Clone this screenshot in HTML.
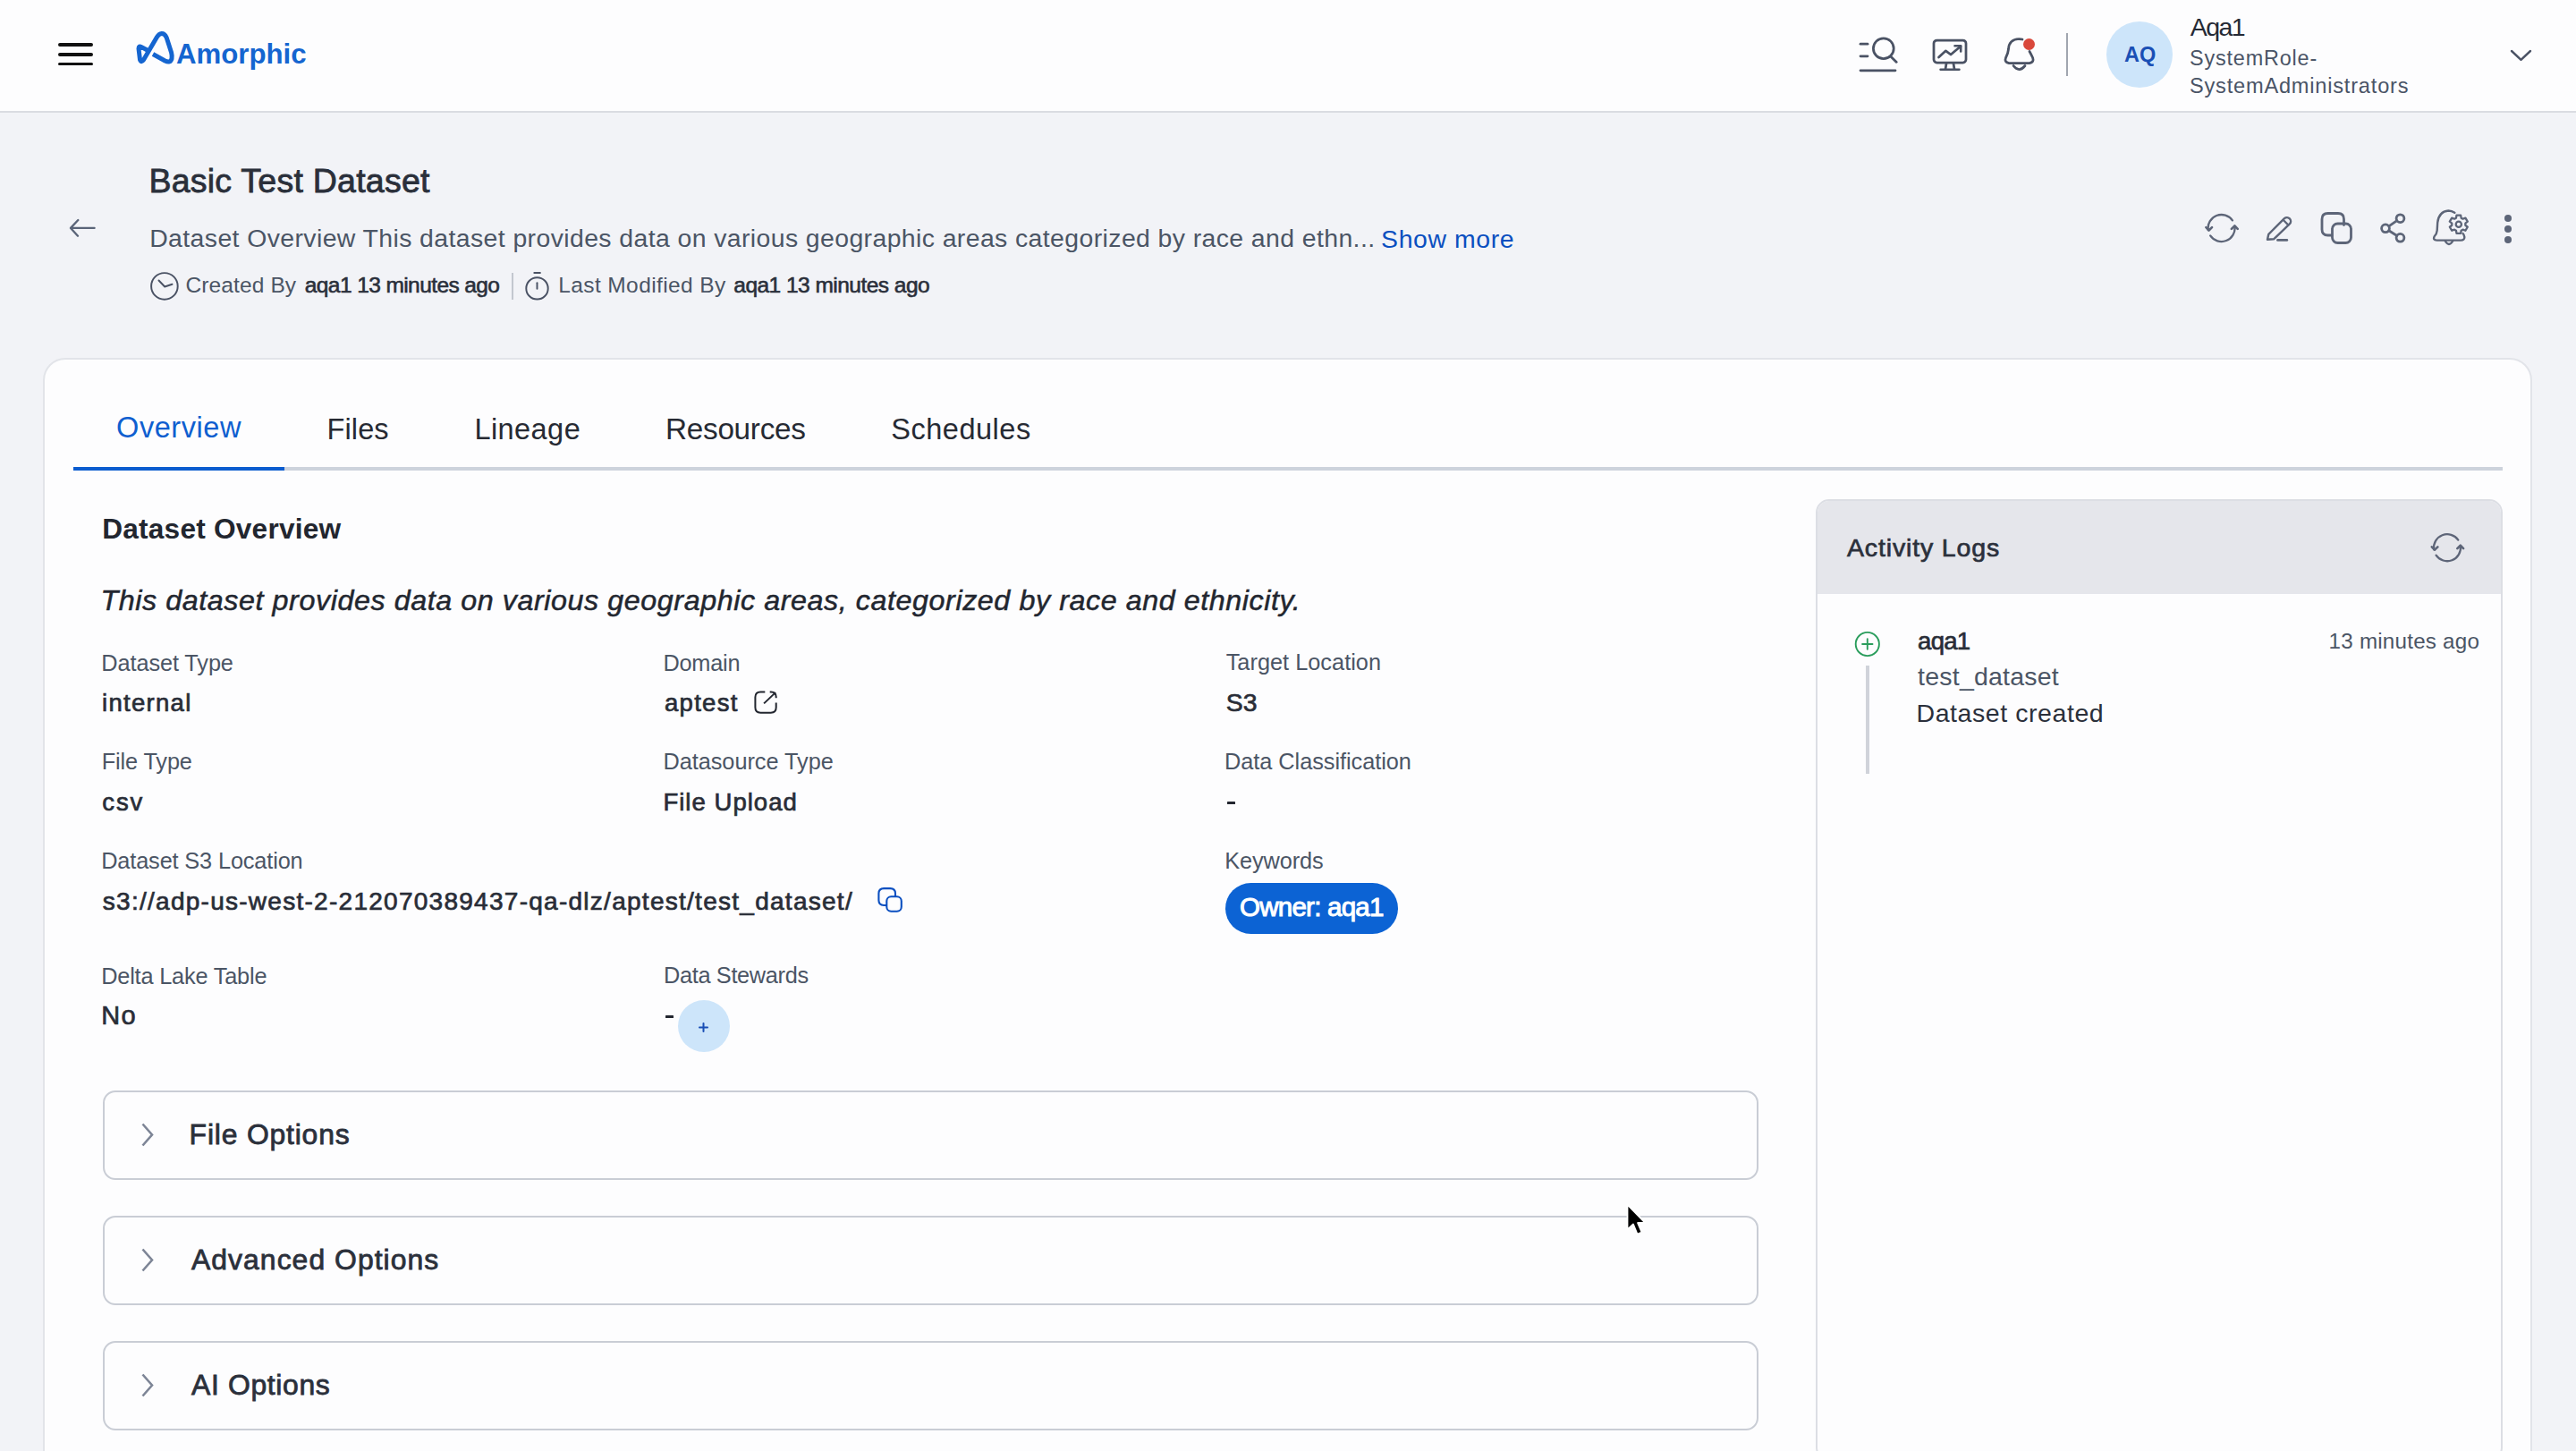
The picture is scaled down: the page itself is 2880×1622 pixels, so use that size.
<!DOCTYPE html>
<html><head><meta charset="utf-8"><style>
html,body{margin:0;padding:0;width:2880px;height:1622px;overflow:hidden;background:#f2f3f7;}
body{position:relative;font-family:"Liberation Sans",sans-serif;}
.t{position:absolute;white-space:nowrap;}
svg{overflow:visible}
@media (max-width:2000px){html{zoom:0.5}}
</style></head><body>
<div style="position:absolute;left:0;top:0;width:2880px;height:124px;background:#fdfdfe;border-bottom:2px solid #dadce2"></div>
<div style="position:absolute;left:64.5px;top:48.4px;width:39.2px;height:3.4px;border-radius:2px;background:#111"></div>
<div style="position:absolute;left:64.5px;top:59.2px;width:39.2px;height:3.4px;border-radius:2px;background:#111"></div>
<div style="position:absolute;left:64.5px;top:70.1px;width:39.2px;height:3.4px;border-radius:2px;background:#111"></div>
<svg style="position:absolute;left:0;top:0" width="400" height="124" viewBox="0 0 400 124">
<path d="M171 60.5 L184.5 68 Q190.5 71 192 65.5 Q192.6 62.5 191.6 58.8 L186.2 42 Q184 37.3 180.7 37.5 Q177.6 37.8 175.4 41.6 L160.6 66.8 Q158 70.5 156.5 66.8 L155 54.2 Q155 50.8 158.3 52.6 L165 56.3" fill="none" stroke="#1565d0" stroke-width="5" stroke-linejoin="round"/>
</svg>
<div class="t" style="left:197.0px;top:45px;font-size:31.2px;line-height:31.2px;color:#1565d0;font-weight:bold;">Amorphic</div>
<svg style="position:absolute;left:2060px;top:30px" width="240" height="60" viewBox="2060 30 240 60" fill="none" stroke="#4a5264" stroke-width="2.75" stroke-linecap="round" stroke-linejoin="round">
<line x1="2080" y1="49.2" x2="2088" y2="49.2"/>
<line x1="2080" y1="62.8" x2="2088" y2="62.8"/>
<line x1="2080" y1="78.8" x2="2119" y2="78.8"/>
<circle cx="2105.8" cy="54.2" r="11.4"/>
<line x1="2114" y1="63.2" x2="2120.3" y2="69.4"/>
<rect x="2162" y="45" width="36" height="25" rx="3.5"/>
<path d="M2176 71 L2175 77.5 M2184 71 L2185 77.5"/>
<line x1="2169.5" y1="77.8" x2="2190.5" y2="77.8" stroke-width="2.4"/>
<path d="M2167.5 64 L2175.4 56.8 L2181 61 L2192 51.8"/>
<path d="M2185.5 51.3 L2192.2 51.3 L2192.2 57.5" stroke-width="2.6"/>
<path d="M2269 57.5 Q2271 61 2272.6 64.5 Q2274.5 69.5 2269 70.6 L2246 70.6 Q2240.5 69.5 2242.5 64.5 Q2245 60 2245.5 55 Q2246 44 2257.4 43.5 Q2259.5 43.5 2261 44"/>
<path d="M2251 73.5 Q2257.4 81.5 2264 73.5"/>
</svg>
<div style="position:absolute;left:2261.5px;top:42.6px;width:13px;height:13px;border-radius:50%;background:#d9483b"></div>
<div style="position:absolute;left:2310px;top:37px;width:2px;height:48px;background:#a0a5af"></div>
<div style="position:absolute;left:2355px;top:24px;width:74px;height:74px;border-radius:50%;background:#cde5fa"></div>
<div class="t" style="left:2375.0px;top:50.2px;font-size:23.5px;line-height:23.5px;color:#1a4fb5;font-weight:bold;">AQ</div>
<div class="t" style="left:2448.8px;top:15.799999999999997px;font-size:28.5px;line-height:28.5px;color:#252a35;letter-spacing:-1.6px;">Aqa1</div>
<div class="t" style="left:2448.0px;top:54.400000000000006px;font-size:23.39px;line-height:23.39px;color:#4a5466;letter-spacing:0.84px;">SystemRole-</div>
<div class="t" style="left:2448.0px;top:84.8px;font-size:23.59px;line-height:23.59px;color:#4a5466;letter-spacing:0.8px;">SystemAdministrators</div>
<svg style="position:absolute;left:2800px;top:50px" width="40" height="24" viewBox="2800 50 40 24" fill="none" stroke="#4a5264" stroke-width="2.4" stroke-linecap="round" stroke-linejoin="round"><path d="M2808 57 L2818.5 66.8 L2829 57"/></svg>
<div class="t" style="left:166.4px;top:183.5px;font-size:37.5px;line-height:37.5px;color:#2a2f3a;letter-spacing:0.249px;-webkit-text-stroke:0.8px #2a2f3a;">Basic Test Dataset</div>
<svg style="position:absolute;left:70px;top:235px" width="45" height="40" viewBox="70 235 45 40" fill="none" stroke="#5a6478" stroke-width="2.3" stroke-linecap="round" stroke-linejoin="round"><path d="M105.6 254.9 L79.2 254.9 M87.3 246 L79 254.9 L87 263.7"/></svg>
<div class="t" style="left:167.2px;top:252.39999999999998px;font-size:28.4px;line-height:28.4px;color:#4b5565;letter-spacing:0.408px;">Dataset Overview This dataset provides data on various geographic areas categorized by race and ethn...</div>
<div class="t" style="left:1544.1px;top:253px;font-size:28.4px;line-height:28.4px;color:#0a4fc0;letter-spacing:0.6px;">Show more</div>
<svg style="position:absolute;left:160px;top:295px" width="470" height="50" viewBox="160 295 470 50" fill="none" stroke="#4a5264" stroke-width="1.95" stroke-linecap="round" stroke-linejoin="round">
<circle cx="183.9" cy="319.9" r="14.8"/>
<path d="M177.5 313.5 L184.2 320.5 L192.5 317.8"/>
<circle cx="600.5" cy="322.4" r="12.2"/>
<line x1="600.5" y1="316.2" x2="600.5" y2="322.8"/>
<line x1="597.3" y1="305" x2="603.9" y2="305"/>
</svg>
<div class="t" style="left:207.5px;top:307.1px;font-size:24.5px;line-height:24.5px;color:#4b5565;letter-spacing:0.116px;">Created By</div>
<div class="t" style="left:340.8px;top:307.26px;font-size:24.5px;line-height:24.5px;color:#2a2f3a;letter-spacing:-0.591px;-webkit-text-stroke:0.6px #2a2f3a;">aqa1 13 minutes ago</div>
<div style="position:absolute;left:571.5px;top:305px;width:2px;height:30px;background:#c3c7cf"></div>
<div class="t" style="left:624.3px;top:307.1px;font-size:24.5px;line-height:24.5px;color:#4b5565;letter-spacing:0.384px;">Last Modified By</div>
<div class="t" style="left:820.3px;top:307.26px;font-size:24.5px;line-height:24.5px;color:#2a2f3a;letter-spacing:-0.529px;-webkit-text-stroke:0.6px #2a2f3a;">aqa1 13 minutes ago</div>
<svg style="position:absolute;left:0;top:0;width:1px;height:1px" viewBox="0 0 1 1" fill="none" stroke="#5d6578" stroke-width="2.3" stroke-linecap="round" stroke-linejoin="round"><path d="M2495.89 246.40 A15.0 15.0 0 0 0 2468.75 257.09"/><path d="M2466.40 254.10 L2469.60 257.50 L2473.00 254.10" stroke-width="2.5999999999999996"/><path d="M2471.16 263.39 A15.0 15.0 0 0 0 2498.45 252.91"/><path d="M2494.90 255.90 L2498.40 252.50 L2501.70 255.90" stroke-width="2.5999999999999996"/></svg>
<svg style="position:absolute;left:2450px;top:225px" width="380" height="60" viewBox="2450 225 380 60" fill="none" stroke="#5d6578" stroke-width="2.8" stroke-linecap="round" stroke-linejoin="round">
<path d="M2535 267.8 L2536.3 261.8 L2554 244.2 A4.25 4.25 0 0 1 2560 250.2 L2542.3 267.2 Z" stroke-width="2.4"/>
<line x1="2552.6" y1="245.8" x2="2558.4" y2="251.6" stroke-width="2.2"/>
<line x1="2546.5" y1="268.4" x2="2556.8" y2="268.4"/>
<path d="M2620.5 251.5 L2620.5 245 Q2620.5 238.5 2614 238.5 L2602.5 238.5 Q2596 238.5 2596 245 L2596 256.5 Q2596 263 2602.5 263 L2607 263"/>
<rect x="2607.5" y="250" width="21" height="21.5" rx="6"/>
<circle cx="2683.5" cy="244.2" r="4.4"/>
<circle cx="2667" cy="255.3" r="4.4"/>
<circle cx="2683.5" cy="265.8" r="4.4"/>
<line x1="2670.8" y1="252.8" x2="2679.8" y2="246.7"/>
<line x1="2670.8" y1="257.8" x2="2679.8" y2="263.5"/>
<path d="M2744.3 237.8 Q2741 235.5 2737.4 235.5 Q2726.5 236.5 2725.2 249 L2724.7 257.6 Q2724.3 261.5 2721.8 264 Q2719.5 268.6 2724.5 268.6 L2751.2 268.6 Q2755.5 268.6 2755.3 265 Q2755 262.5 2753.6 261" stroke-width="2.4"/>
<path d="M2733.8 269.5 Q2738 276.5 2742.2 269.5" stroke-width="2.4"/>
<circle cx="2748.8" cy="250.7" r="3.1" stroke-width="2.3"/>
<path d="M2745.95 243.65 L2746.46 240.57 L2751.14 240.57 L2751.65 243.65 L2753.48 244.71 L2756.41 243.61 L2758.75 247.66 L2756.33 249.64 L2756.33 251.76 L2758.75 253.74 L2756.41 257.79 L2753.48 256.69 L2751.65 257.75 L2751.14 260.83 L2746.46 260.83 L2745.95 257.75 L2744.12 256.69 L2741.19 257.79 L2738.85 253.74 L2741.27 251.76 L2741.27 249.64 L2738.85 247.66 L2741.19 243.61 L2744.12 244.71 Z" stroke-width="2.3"/>
</svg>
<div style="position:absolute;left:2800.1px;top:240px;width:8px;height:8px;border-radius:50%;background:#5d6578"></div>
<div style="position:absolute;left:2800.1px;top:251.8px;width:8px;height:8px;border-radius:50%;background:#5d6578"></div>
<div style="position:absolute;left:2800.1px;top:263.6px;width:8px;height:8px;border-radius:50%;background:#5d6578"></div>
<div style="position:absolute;left:48px;top:400px;width:2779px;height:1400px;background:#fdfdfe;border:2px solid #e2e4e9;border-radius:25px"></div>
<div style="position:absolute;left:82px;top:522px;width:2716px;height:4px;background:#cdd3dc"></div>
<div style="position:absolute;left:82px;top:522px;width:236px;height:4px;background:#0b5ccf"></div>
<div class="t" style="left:130.1px;top:461.8px;font-size:32.5px;line-height:32.5px;color:#0f5fd0;letter-spacing:0.549px;">Overview</div>
<div class="t" style="left:365.6px;top:464.1px;font-size:32.5px;line-height:32.5px;color:#262a33;letter-spacing:0.1px;">Files</div>
<div class="t" style="left:530.4px;top:464px;font-size:32.5px;line-height:32.5px;color:#262a33;letter-spacing:0.44px;">Lineage</div>
<div class="t" style="left:744.0px;top:463.3px;font-size:33.28px;line-height:33.28px;color:#262a33;letter-spacing:-0.26px;">Resources</div>
<div class="t" style="left:996.2px;top:464.3px;font-size:32.5px;line-height:32.5px;color:#262a33;letter-spacing:0.53px;">Schedules</div>
<div class="t" style="left:114.2px;top:575.9px;font-size:31.6px;line-height:31.6px;color:#22262f;font-weight:bold;letter-spacing:0.235px;">Dataset Overview</div>
<div class="t" style="left:112.5px;top:654.78px;font-size:32.24px;line-height:32.24px;color:#22262f;font-style:italic;letter-spacing:0.582px;-webkit-text-stroke:0.5px #22262f;">This dataset provides data on various geographic areas, categorized by race and ethnicity.</div>
<div class="t" style="left:113.3px;top:728.9px;font-size:25.3px;line-height:25.3px;color:#4b5565;letter-spacing:-0.087px;">Dataset Type</div>
<div class="t" style="left:741.4px;top:728.9px;font-size:25.3px;line-height:25.3px;color:#4b5565;letter-spacing:-0.208px;">Domain</div>
<div class="t" style="left:1370.7px;top:728.4px;font-size:25.3px;line-height:25.3px;color:#4b5565;letter-spacing:0.023px;">Target Location</div>
<div class="t" style="left:114.1px;top:772.12px;font-size:27.5px;line-height:27.5px;color:#292d37;letter-spacing:1.28px;-webkit-text-stroke:0.7px #292d37;">internal</div>
<div class="t" style="left:743.0px;top:771.92px;font-size:27.5px;line-height:27.5px;color:#292d37;letter-spacing:1.28px;-webkit-text-stroke:0.7px #292d37;">aptest</div>
<div class="t" style="left:1370.7px;top:771.0px;font-size:28.3px;line-height:28.3px;color:#292d37;letter-spacing:0.08px;-webkit-text-stroke:0.7px #292d37;">S3</div>
<div class="t" style="left:113.7px;top:839.3px;font-size:25.3px;line-height:25.3px;color:#4b5565;letter-spacing:-0.12px;">File Type</div>
<div class="t" style="left:741.4px;top:839.1px;font-size:25.3px;line-height:25.3px;color:#4b5565;letter-spacing:-0.023px;">Datasource Type</div>
<div class="t" style="left:1369.1px;top:839.3px;font-size:25.3px;line-height:25.3px;color:#4b5565;letter-spacing:-0.04px;">Data Classification</div>
<div class="t" style="left:114.3px;top:882.74px;font-size:27.5px;line-height:27.5px;color:#292d37;letter-spacing:1.88px;-webkit-text-stroke:0.7px #292d37;">csv</div>
<div class="t" style="left:741.4px;top:883.26px;font-size:27.5px;line-height:27.5px;color:#292d37;letter-spacing:1.032px;-webkit-text-stroke:0.7px #292d37;">File Upload</div>
<div class="t" style="left:113.2px;top:950.1px;font-size:25.3px;line-height:25.3px;color:#4b5565;letter-spacing:-0.129px;">Dataset S3 Location</div>
<div class="t" style="left:1369.3px;top:950.2px;font-size:25.3px;line-height:25.3px;color:#4b5565;letter-spacing:-0.091px;">Keywords</div>
<div class="t" style="left:114.8px;top:993.88px;font-size:28.0px;line-height:28.0px;color:#292d37;letter-spacing:1.269px;-webkit-text-stroke:0.7px #292d37;">s3://adp-us-west-2-212070389437-qa-dlz/aptest/test_dataset/</div>
<div class="t" style="left:113.2px;top:1078.7px;font-size:25.3px;line-height:25.3px;color:#4b5565;letter-spacing:-0.181px;">Delta Lake Table</div>
<div class="t" style="left:742.0px;top:1078.2px;font-size:25.3px;line-height:25.3px;color:#4b5565;letter-spacing:-0.32px;">Data Stewards</div>
<div class="t" style="left:113.2px;top:1121.08px;font-size:28.95px;line-height:28.95px;color:#292d37;letter-spacing:1.44px;-webkit-text-stroke:0.7px #292d37;">No</div>
<div style="position:absolute;left:1372px;top:896px;width:9px;height:2.8px;background:#22262f;border-radius:0.5px"></div>
<div style="position:absolute;left:744px;top:1135.1px;width:8.9px;height:2.8px;background:#22262f;border-radius:0.5px"></div>
<svg style="position:absolute;left:0;top:0;width:1px;height:1px" viewBox="0 0 1 1" fill="none" stroke="#22262f" stroke-width="2" stroke-linecap="butt" stroke-linejoin="round">
<path d="M855.3 773.4 L850.3 773.4 Q844.4 773.4 844.4 779.3 L844.4 790.8 Q844.4 796.7 850.3 796.7 L861.8 796.7 Q867.7 796.7 867.7 790.8 L867.7 785.5"/>
<path d="M860.7 773.4 L862 773.4 Q867.7 773.4 867.7 779.1 L867.7 780.2"/>
<path d="M854.1 786.4 L867 774.1"/>
</svg>
<svg style="position:absolute;left:0;top:0;width:1px;height:1px" viewBox="0 0 1 1" fill="none" stroke="#0b4fc0" stroke-width="2.1" stroke-linecap="butt" stroke-linejoin="round">
<path d="M1001 1002.3 L1001 998.8 Q1001 993.1 995.3 993.1 L988.1 993.1 Q982.4 993.1 982.4 998.8 L982.4 1006.3 Q982.4 1012 988.1 1012 L991.3 1012"/>
<rect x="991.3" y="1002.3" width="16.5" height="16.4" rx="5"/>
</svg>
<div style="position:absolute;left:1370px;top:987px;width:193px;height:57px;border-radius:28.5px;background:#0c63d4"></div>
<div class="t" style="left:1386.0px;top:999.2px;font-size:29.5px;line-height:29.5px;color:#ffffff;letter-spacing:-0.752px;-webkit-text-stroke:1.0px #ffffff;">Owner: aqa1</div>
<div style="position:absolute;left:758px;top:1118px;width:58px;height:58px;border-radius:50%;background:#cde5fa"></div>
<svg style="position:absolute;left:775px;top:1137px" width="24" height="24" viewBox="775 1137 24 24" fill="none" stroke="#1a4fb5" stroke-width="2" stroke-linecap="round"><path d="M786.5 1144 L786.5 1153 M782 1148.5 L791 1148.5"/></svg>
<div style="position:absolute;left:114.5px;top:1219px;width:1847px;height:95.8px;border:2px solid #c9cdd5;border-radius:14px;background:#fdfdfe"></div>
<svg style="position:absolute;left:150px;top:1249px" width="30" height="40" viewBox="0 0 30 40" fill="none" stroke="#7d8596" stroke-width="2.6" stroke-linecap="butt" stroke-linejoin="miter"><path d="M9.5 7.5 L20 19.5 L9.5 31.5"/></svg>
<div class="t" style="left:211.62px;top:1253.2px;font-size:31.86px;line-height:31.86px;color:#2b303b;letter-spacing:0.822px;-webkit-text-stroke:0.8px #2b303b;">File Options</div>
<div style="position:absolute;left:114.5px;top:1359px;width:1847px;height:95.8px;border:2px solid #c9cdd5;border-radius:14px;background:#fdfdfe"></div>
<svg style="position:absolute;left:150px;top:1389px" width="30" height="40" viewBox="0 0 30 40" fill="none" stroke="#7d8596" stroke-width="2.6" stroke-linecap="butt" stroke-linejoin="miter"><path d="M9.5 7.5 L20 19.5 L9.5 31.5"/></svg>
<div class="t" style="left:214.02px;top:1393.28px;font-size:31.86px;line-height:31.86px;color:#2b303b;letter-spacing:1.056px;-webkit-text-stroke:0.8px #2b303b;">Advanced Options</div>
<div style="position:absolute;left:114.5px;top:1499px;width:1847px;height:95.8px;border:2px solid #c9cdd5;border-radius:14px;background:#fdfdfe"></div>
<svg style="position:absolute;left:150px;top:1529px" width="30" height="40" viewBox="0 0 30 40" fill="none" stroke="#7d8596" stroke-width="2.6" stroke-linecap="butt" stroke-linejoin="miter"><path d="M9.5 7.5 L20 19.5 L9.5 31.5"/></svg>
<div class="t" style="left:214.02px;top:1532.66px;font-size:31.86px;line-height:31.86px;color:#2b303b;letter-spacing:0.667px;-webkit-text-stroke:0.8px #2b303b;">AI Options</div>
<div style="position:absolute;left:2030px;top:558px;width:1px;height:1px"></div>
<div style="position:absolute;left:2030px;top:558px;width:764px;height:1071px;border:2px solid #dcdee4;border-radius:15px;background:#fdfdfe;overflow:hidden"><div style="height:104px;background:#e5e6eb"></div></div>
<div class="t" style="left:2065.0px;top:597.74px;font-size:28.5px;line-height:28.5px;color:#2b303b;letter-spacing:0.853px;-webkit-text-stroke:0.7px #2b303b;">Activity Logs</div>
<svg style="position:absolute;left:0;top:0;width:1px;height:1px" viewBox="0 0 1 1" fill="none" stroke="#5d6578" stroke-width="2.3" stroke-linecap="round" stroke-linejoin="round"><path d="M2748.29 603.60 A15.0 15.0 0 0 0 2721.15 614.29"/><path d="M2718.80 611.30 L2722.00 614.70 L2725.40 611.30" stroke-width="2.5999999999999996"/><path d="M2723.56 620.59 A15.0 15.0 0 0 0 2750.85 610.11"/><path d="M2747.30 613.10 L2750.80 609.70 L2754.10 613.10" stroke-width="2.5999999999999996"/></svg>
<svg style="position:absolute;left:2065px;top:700px" width="45" height="170" viewBox="2065 700 45 170" fill="none" stroke="#2a9d5c" stroke-width="1.9" stroke-linecap="round">
<circle cx="2087.8" cy="720" r="13.1"/>
<path d="M2087.8 714.3 L2087.8 725.7 M2082.1 720 L2093.5 720"/>
</svg>
<div style="position:absolute;left:2086px;top:744px;width:4px;height:121px;background:#d0d3da"></div>
<div class="t" style="left:2144.1px;top:703.22px;font-size:27.5px;line-height:27.5px;color:#292d37;letter-spacing:-0.72px;-webkit-text-stroke:0.7px #292d37;">aqa1</div>
<div class="t" style="left:2144.1px;top:742px;font-size:28.5px;line-height:28.5px;color:#4b5565;letter-spacing:0.218px;">test_dataset</div>
<div class="t" style="left:2142.5px;top:783px;font-size:28.5px;line-height:28.5px;color:#2b303b;letter-spacing:0.571px;">Dataset created</div>
<div class="t" style="left:2603.6px;top:705px;font-size:24.2px;line-height:24.2px;color:#4b5565;letter-spacing:0.222px;">13 minutes ago</div>
<svg style="position:absolute;left:1815px;top:1343px" width="34" height="44" viewBox="0 0 34 44"><path d="M4.5 3.5 L4.5 31.5 L11 25.5 L15.5 36.5 L20.5 34.5 L16 24 L24.5 24 Z" fill="#000" stroke="#fff" stroke-width="1.8" stroke-linejoin="round"/></svg>
</body></html>
